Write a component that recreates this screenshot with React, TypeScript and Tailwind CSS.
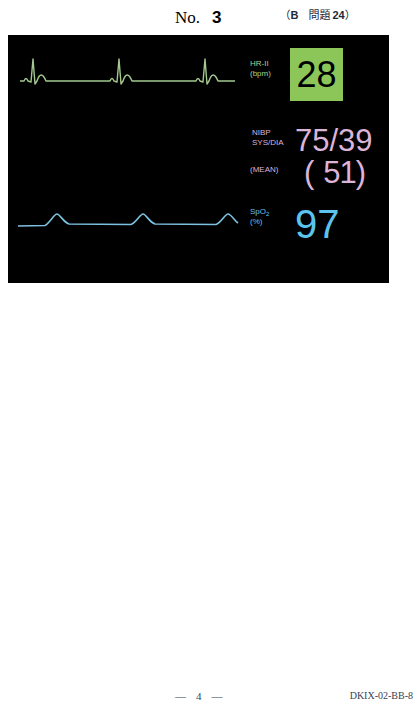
const serif = { fontFamily: '"Liberation Serif", "Noto Sans CJK JP", serif' };

function EcgWave() {
  const base = 33;
  const beats = [25, 111, 197];
  let d = `M12 ${base}`;
  beats.forEach((r) => {
    d += ` L${r - 9} ${base} Q${r - 7} ${base - 5} ${r - 5} ${base} L${r - 2} ${base + 1} L${r} ${base - 22} L${r + 2} ${base + 3} L${r + 4} ${base} Q${r + 8} ${base - 12} ${r + 13} ${base}`;
  });
  d += ` L227 ${base}`;
  return (
    <svg width="232" height="53" viewBox="0 0 232 53" className="shrink-0">
      <path d={d} fill="none" stroke="#a3c98f" strokeWidth="1.4" strokeLinejoin="round" />
    </svg>
  );
}

function PlethWave() {
  const d =
    "M10 20 L37 19.5 C42 17 46 8 49 8 C52 8 55 16 61 18 L123 18.5 C128 17 132 8 135 8 C138 8 141 16 147 18 L208 18.5 C213 17 217 8 220 8 C223 8 226 14 230 17";
  return (
    <svg width="232" height="36" viewBox="0 0 232 36" className="shrink-0">
      <path d={d} fill="none" stroke="#7cc2df" strokeWidth="1.6" strokeLinejoin="round" />
    </svg>
  );
}

export default function App() {
  return (
    <div className="relative h-[712px] w-[420px] bg-white text-black" style={{ fontFamily: '"Liberation Sans", Arial, sans-serif' }}>
      <header className="flex h-[35px] items-start pt-[5px]">
        <div className="ml-[175px] flex items-baseline">
          <span className="text-[17px]" style={serif}>No.</span>
          <span className="ml-[12px] text-[17px] font-bold">3</span>
        </div>
        <div className="ml-[58px] mt-[2px] flex items-center text-[11px] text-gray-800" style={{ fontFamily: '"Liberation Sans", "Noto Sans CJK JP", sans-serif' }}>
          <span>（</span>
          <span className="font-bold">B</span>
          <span className="ml-[10px]">問題</span>
          <span className="ml-[2px] font-bold">24</span>
          <span>）</span>
        </div>
      </header>

      <section className="ml-[8px] flex h-[248px] w-[381px] flex-col bg-black pt-[13px]">
        <div className="flex h-[53px] items-start">
          <EcgWave />
          <div className="ml-[10px] mt-[11px] w-[40px] text-[8px] leading-[10px] text-[#a9d48f]">
            <div>HR-II</div>
            <div>(bpm)</div>
          </div>
          <div className="flex h-[53px] w-[53px] items-center justify-center bg-[#8cc659] text-[36px] leading-none">
            28
          </div>
        </div>

        <div className="mt-[24px] flex h-[62px] items-start text-[#dcb4d8]">
          <div className="w-[232px] shrink-0" />
          <div className="ml-[12px] w-[42px] text-[8px] leading-[10px]">
            <div className="mt-[3px]">NIBP</div>
            <div>SYS/DIA</div>
            <div className="mt-[17px] -ml-[2px]">(MEAN)</div>
          </div>
          <div className="ml-[1px] flex flex-col text-[31px] leading-[32px]">
            <div>75/39</div>
            <div className="ml-[9px] flex">
              <span>(</span>
              <span className="ml-[9px] tracking-[-1px]">51)</span>
            </div>
          </div>
        </div>

        <div className="mt-[19px] flex h-[36px] items-start">
          <PlethWave />
          <div className="ml-[10px] mt-[1px] w-[45px] text-[8px] leading-[10px] text-[#6cc0e8]">
            <div>
              SpO<sub className="text-[6px]">2</sub>
            </div>
            <div>(%)</div>
          </div>
          <div className="text-[40px] leading-[36px] text-[#5cc4ec]">97</div>
        </div>
      </section>

      <footer className="absolute bottom-[8px] left-0 flex w-full items-center text-[11px] text-gray-700" style={serif}>
        <div className="ml-[175px] flex items-center gap-[10px]">
          <span>—</span>
          <span>4</span>
          <span>—</span>
        </div>
        <span className="ml-auto mr-[7px] text-[10px]">DKIX-02-BB-8</span>
      </footer>
    </div>
  );
}
